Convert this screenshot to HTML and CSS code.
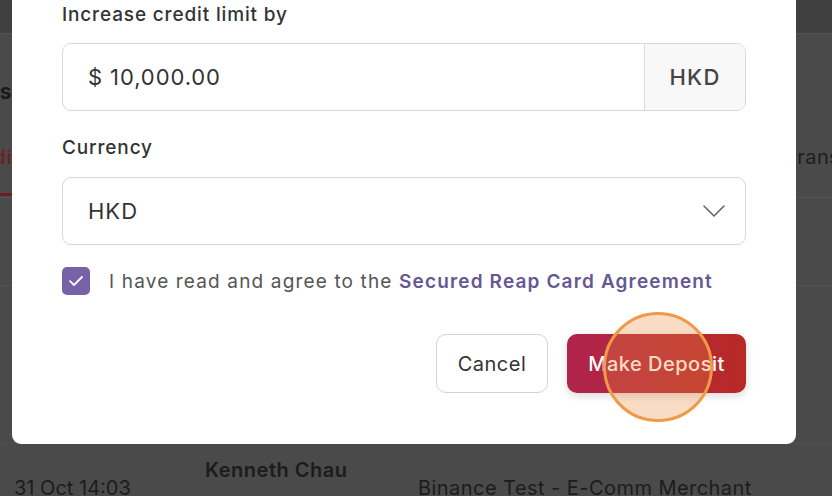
FILE: index.html
```html
<!DOCTYPE html>
<html lang="en">
<head>
<meta charset="utf-8">
<title>Increase credit limit</title>
<link rel="stylesheet" href="styles.css">
</head>
<body>
<div class="page">
  <div class="topbar"></div>
  <div class="title-row">
    <div class="crop"><span class="title">Secured Visas</span></div>
  </div>
  <div class="tabs">
    <div class="crop"><span class="tab active">Credi</span></div>
    <div class="tab-right"><span class="tab">Transactions</span></div>
  </div>
  <div class="row row-a"></div>
  <div class="row row-b"></div>
  <div class="data-row">
    <span class="cell date">31 Oct 14:03</span>
    <span class="cell name">Kenneth Chau</span>
    <span class="cell merchant">Binance Test - E-Comm Merchant</span>
  </div>
</div>

<div class="modal">
  <label class="field-label">Increase credit limit by</label>
  <div class="input-group">
    <div class="input-value">$ 10,000.00</div>
    <div class="input-addon">HKD</div>
  </div>

  <label class="field-label currency-label">Currency</label>
  <div class="select">
    <span class="select-value">HKD</span>
    <svg class="chevron" width="22" height="12" viewBox="0 0 22 12" aria-hidden="true">
      <path d="M1 1 L11 11 L21 1" fill="none" stroke="#666" stroke-width="1.6" stroke-linecap="round" stroke-linejoin="round"/>
    </svg>
  </div>

  <div class="agree">
    <span class="checkbox">
      <svg width="16" height="12" viewBox="0 0 16 12" aria-hidden="true">
        <path d="M2 6.2 L6 10 L14 2" fill="none" stroke="#fff" stroke-width="1.8" stroke-linecap="round" stroke-linejoin="round"/>
      </svg>
    </span>
    <span class="agree-text">I have read and agree to the <a class="link">Secured Reap Card Agreement</a></span>
  </div>

  <div class="actions">
    <button class="btn btn-cancel">Cancel</button>
    <button class="btn btn-primary">Make Deposit
      <span class="click-marker"></span>
    </button>
  </div>
</div>
</body>
</html>
```

FILE: styles.css
```css
* { box-sizing: border-box; }

html, body {
  margin: 0;
  padding: 0;
}

body {
  width: 832px;
  height: 496px;
  overflow: hidden;
  position: relative;
  background: #4a4a4a;
  font-family: Inter, "Noto Sans", "Liberation Sans", sans-serif;
}

/* ---------- dimmed page behind the modal ---------- */
.page {
  display: flex;
  flex-direction: column;
  color: #1c1c1c;
}

.topbar {
  height: 34px;
  background: #404040;
  border-bottom: 1px solid #525252;
}

.title-row {
  height: 86px;
  padding-top: 46px;
}

.crop {
  width: 12px;
  overflow: hidden;
  display: flex;
  justify-content: flex-end;
  white-space: nowrap;
}

.title {
  font-size: 21px;
  line-height: 24px;
  font-weight: 700;
  letter-spacing: 0.6px;
  color: #1a1a1a;
}

.tabs {
  height: 78px;
  display: flex;
  justify-content: space-between;
  border-bottom: 1px solid #555;
}

.tab {
  font-size: 20px;
  line-height: 24px;
  letter-spacing: 0.5px;
  color: #1e1e1e;
}

.tabs .crop {
  padding-top: 25px;
  height: 76px;
  border-bottom: 3px solid #6e1f22;
  align-items: flex-start;
}

.tab.active {
  color: #6e1f22;
  font-weight: 500;
}

.tab-right {
  width: 35px;
  overflow: hidden;
  padding-top: 25px;
  white-space: nowrap;
  display: flex;
  justify-content: flex-start;
}

.tab-right .tab {
  margin-left: -12px;
}

.row-a {
  height: 88px;
  border-bottom: 1px solid #535353;
}

.row-b {
  height: 158px;
  border-bottom: 1px solid #505050;
}

.data-row {
  display: grid;
  grid-template-columns: 191px 213px 1fr;
  padding-left: 14px;
  white-space: nowrap;
  font-size: 20px;
  line-height: 24px;
  color: #1c1c1c;
}

.date { padding-top: 32px; letter-spacing: 0; }
.name { padding-top: 14px; font-weight: 600; letter-spacing: 0.5px; }
.merchant { padding-top: 32px; letter-spacing: 0.45px; }

/* ---------- modal ---------- */
.modal {
  position: absolute;
  left: 12px;
  top: -39px;
  width: 784px;
  padding: 42px 50px 51px;
  background: #fff;
  border-radius: 9px;
  display: flex;
  flex-direction: column;
  color: #333;
}

.field-label {
  font-size: 19px;
  line-height: 24px;
  font-weight: 500;
  letter-spacing: 0.85px;
  color: #333;
}

.input-group {
  margin-top: 16px;
  height: 68px;
  display: flex;
  border: 1px solid #d8d8d8;
  border-radius: 9px;
  overflow: hidden;
}

.input-value {
  flex: 1;
  display: flex;
  align-items: center;
  padding-left: 25px;
  font-size: 22px;
  letter-spacing: 0.9px;
  color: #333;
}

.input-addon {
  width: 101px;
  display: flex;
  align-items: center;
  justify-content: center;
  background: #f8f8f8;
  border-left: 1px solid #dcdcdc;
  font-size: 22px;
  font-weight: 500;
  letter-spacing: 1.2px;
  color: #444;
}

.currency-label {
  margin-top: 25px;
}

.select {
  margin-top: 17px;
  height: 68px;
  display: flex;
  align-items: center;
  justify-content: space-between;
  padding: 0 20px 0 25px;
  border: 1px solid #d8d8d8;
  border-radius: 9px;
}

.select-value {
  font-size: 22px;
  letter-spacing: 1px;
  color: #333;
}

.agree {
  margin-top: 22px;
  display: flex;
  align-items: center;
  gap: 19px;
}

.checkbox {
  width: 28px;
  height: 28px;
  border-radius: 5px;
  background: #7762a8;
  display: flex;
  align-items: center;
  justify-content: center;
}

.agree-text {
  font-size: 19px;
  letter-spacing: 1.15px;
  color: #555;
}

.link {
  color: #665894;
  font-weight: 600;
}

.actions {
  margin-top: 39px;
  display: flex;
  justify-content: flex-end;
  gap: 19px;
}

.btn {
  height: 59px;
  border-radius: 10px;
  font-family: inherit;
  font-size: 20px;
  letter-spacing: 0.5px;
  padding: 0;
}

.btn-cancel {
  width: 112px;
  background: #fff;
  border: 1px solid #d4d4d4;
  color: #333;
}

.btn-primary {
  position: relative;
  width: 179px;
  border: none;
  color: #fff;
  font-weight: 500;
  background: linear-gradient(90deg, #b0244c 0%, #b32639 55%, #b82a24 100%);
  box-shadow: 0 3px 8px rgba(0, 0, 0, 0.15);
}

.click-marker {
  position: absolute;
  left: 36px;
  top: -22px;
  width: 110px;
  height: 110px;
  border-radius: 50%;
  border: 3px solid #ef9a48;
  background: rgba(240, 140, 60, 0.3);
}
```
